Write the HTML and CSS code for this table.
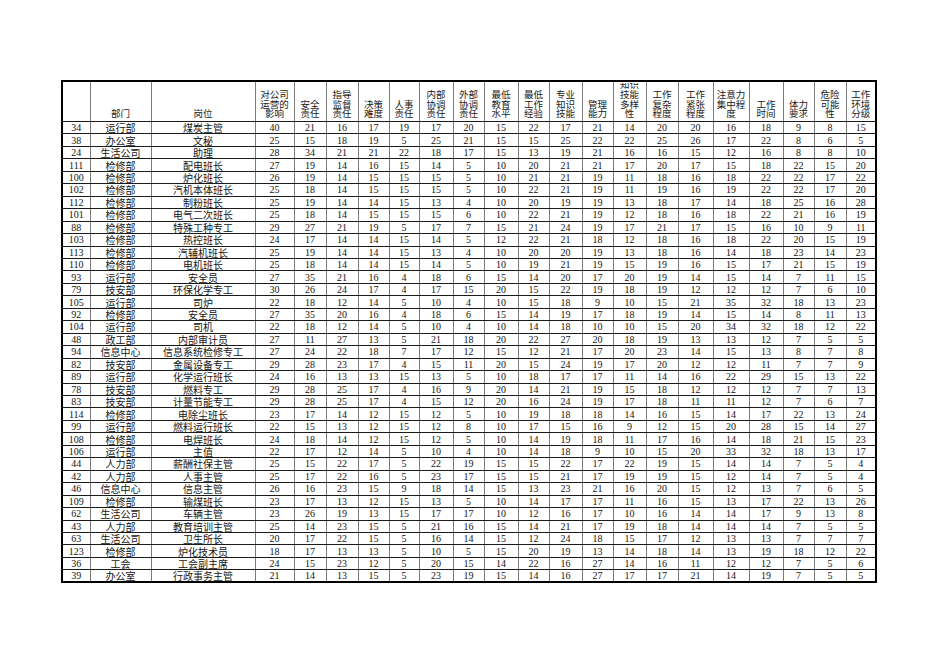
FILE: index.html
```html
<!DOCTYPE html>
<html lang="zh-CN">
<head>
<meta charset="utf-8">
<title>岗位评价表</title>
<link rel="stylesheet" href="styles.css">
</head>
<body>
<table class="sheet">
<colgroup>
<col style="width:28px"><col style="width:61px"><col style="width:104px"><col style="width:39px"><col style="width:32px"><col style="width:32px"><col style="width:31px"><col style="width:30px"><col style="width:34px"><col style="width:31px"><col style="width:34px"><col style="width:31px"><col style="width:33px"><col style="width:31px"><col style="width:33px"><col style="width:32px"><col style="width:35px"><col style="width:36px"><col style="width:34px"><col style="width:31px"><col style="width:32px"><col style="width:30px">
</colgroup>
<thead>
<tr class="head">
<th><div class="hd"></div></th>
<th><div class="hd">部门</div></th>
<th><div class="hd">岗位</div></th>
<th><div class="hd">对公司<br>运营的<br>影响</div></th>
<th><div class="hd">安全<br>责任</div></th>
<th><div class="hd">指导<br>监督<br>责任</div></th>
<th><div class="hd">决策<br>难度</div></th>
<th><div class="hd">人事<br>责任</div></th>
<th><div class="hd">内部<br>协调<br>责任</div></th>
<th><div class="hd">外部<br>协调<br>责任</div></th>
<th><div class="hd">最低<br>教育<br>水平</div></th>
<th><div class="hd">最低<br>工作<br>经验</div></th>
<th><div class="hd">专业<br>知识<br>技能</div></th>
<th><div class="hd">管理<br>能力</div></th>
<th><div class="hd">知识<br>技能<br>多样<br>性</div></th>
<th><div class="hd">工作<br>复杂<br>程度</div></th>
<th><div class="hd">工作<br>紧张<br>程度</div></th>
<th><div class="hd">注意力<br>集中程<br>度</div></th>
<th><div class="hd">工作<br>时间</div></th>
<th><div class="hd">体力<br>要求</div></th>
<th><div class="hd">危险<br>可能<br>性</div></th>
<th><div class="hd">工作<br>环境<br>分级</div></th>
</tr>
</thead>
<tbody>
<tr><td>34<td>运行部<td>煤炭主管<td>40<td>21<td>16<td>17<td>19<td>17<td>20<td>15<td>22<td>17<td>21<td>14<td>20<td>20<td>16<td>18<td>9<td>8<td>15</tr>
<tr><td>38<td>办公室<td>文秘<td>25<td>15<td>18<td>19<td>5<td>25<td>21<td>15<td>15<td>25<td>22<td>22<td>25<td>26<td>17<td>22<td>8<td>6<td>5</tr>
<tr><td>24<td>生活公司<td>助理<td>28<td>34<td>21<td>21<td>22<td>18<td>17<td>15<td>13<td>19<td>21<td>16<td>16<td>15<td>12<td>16<td>8<td>8<td>10</tr>
<tr><td>111<td>检修部<td>配电班长<td>27<td>19<td>14<td>16<td>15<td>14<td>5<td>10<td>20<td>21<td>21<td>17<td>20<td>17<td>15<td>18<td>22<td>15<td>20</tr>
<tr><td>100<td>检修部<td>炉化班长<td>26<td>19<td>14<td>15<td>15<td>15<td>5<td>10<td>21<td>21<td>19<td>11<td>18<td>16<td>18<td>22<td>22<td>17<td>22</tr>
<tr><td>102<td>检修部<td>汽机本体班长<td>25<td>18<td>14<td>15<td>15<td>15<td>5<td>10<td>22<td>21<td>19<td>11<td>19<td>16<td>19<td>22<td>22<td>17<td>20</tr>
<tr><td>112<td>检修部<td>制粉班长<td>25<td>19<td>14<td>14<td>15<td>13<td>4<td>10<td>20<td>19<td>19<td>13<td>18<td>17<td>14<td>18<td>25<td>16<td>28</tr>
<tr><td>101<td>检修部<td>电气二次班长<td>25<td>18<td>14<td>15<td>15<td>15<td>6<td>10<td>22<td>21<td>19<td>12<td>18<td>16<td>18<td>22<td>21<td>16<td>19</tr>
<tr><td>88<td>检修部<td>特殊工种专工<td>29<td>27<td>21<td>19<td>5<td>17<td>7<td>15<td>21<td>24<td>19<td>17<td>21<td>17<td>15<td>16<td>10<td>9<td>11</tr>
<tr><td>103<td>检修部<td>热控班长<td>24<td>17<td>14<td>14<td>15<td>14<td>5<td>12<td>22<td>21<td>18<td>12<td>18<td>16<td>18<td>22<td>20<td>15<td>19</tr>
<tr><td>113<td>检修部<td>汽辅机班长<td>25<td>19<td>14<td>14<td>15<td>13<td>4<td>10<td>20<td>20<td>19<td>13<td>18<td>16<td>14<td>18<td>23<td>14<td>23</tr>
<tr><td>110<td>检修部<td>电机班长<td>25<td>18<td>14<td>14<td>15<td>14<td>5<td>10<td>19<td>21<td>19<td>15<td>19<td>16<td>15<td>17<td>21<td>15<td>19</tr>
<tr><td>93<td>运行部<td>安全员<td>27<td>35<td>21<td>16<td>4<td>18<td>6<td>15<td>14<td>20<td>17<td>20<td>19<td>14<td>15<td>14<td>7<td>11<td>15</tr>
<tr><td>79<td>技安部<td>环保化学专工<td>30<td>26<td>24<td>17<td>4<td>17<td>15<td>20<td>15<td>22<td>19<td>18<td>19<td>12<td>12<td>12<td>7<td>6<td>10</tr>
<tr><td>105<td>运行部<td>司炉<td>22<td>18<td>12<td>14<td>5<td>10<td>4<td>10<td>15<td>18<td>9<td>10<td>15<td>21<td>35<td>32<td>18<td>13<td>23</tr>
<tr><td>92<td>检修部<td>安全员<td>27<td>35<td>20<td>16<td>4<td>18<td>6<td>15<td>14<td>19<td>17<td>18<td>19<td>14<td>15<td>14<td>8<td>11<td>13</tr>
<tr><td>104<td>运行部<td>司机<td>22<td>18<td>12<td>14<td>5<td>10<td>4<td>10<td>14<td>18<td>10<td>10<td>15<td>20<td>34<td>32<td>18<td>12<td>22</tr>
<tr><td>48<td>政工部<td>内部审计员<td>27<td>11<td>27<td>13<td>5<td>21<td>18<td>20<td>22<td>27<td>20<td>18<td>19<td>13<td>13<td>12<td>7<td>5<td>5</tr>
<tr><td>94<td>信息中心<td>信息系统检修专工<td>27<td>24<td>22<td>18<td>7<td>17<td>12<td>15<td>12<td>21<td>17<td>20<td>23<td>14<td>15<td>13<td>8<td>7<td>8</tr>
<tr><td>82<td>技安部<td>金属设备专工<td>29<td>28<td>23<td>17<td>4<td>15<td>11<td>20<td>15<td>24<td>19<td>17<td>20<td>12<td>12<td>11<td>7<td>7<td>9</tr>
<tr><td>89<td>运行部<td>化学运行班长<td>24<td>16<td>13<td>13<td>15<td>13<td>5<td>10<td>18<td>17<td>17<td>11<td>14<td>16<td>22<td>29<td>15<td>13<td>22</tr>
<tr><td>78<td>技安部<td>燃料专工<td>29<td>28<td>25<td>17<td>4<td>16<td>9<td>20<td>14<td>21<td>19<td>15<td>18<td>12<td>12<td>12<td>7<td>7<td>13</tr>
<tr><td>83<td>技安部<td>计量节能专工<td>29<td>28<td>25<td>17<td>4<td>15<td>12<td>20<td>16<td>24<td>19<td>17<td>18<td>11<td>11<td>12<td>7<td>6<td>7</tr>
<tr><td>114<td>检修部<td>电除尘班长<td>23<td>17<td>14<td>12<td>15<td>12<td>5<td>10<td>19<td>18<td>18<td>14<td>16<td>15<td>14<td>17<td>22<td>13<td>24</tr>
<tr><td>99<td>运行部<td>燃料运行班长<td>22<td>15<td>13<td>12<td>15<td>12<td>8<td>10<td>17<td>15<td>16<td>9<td>12<td>15<td>20<td>28<td>15<td>14<td>27</tr>
<tr><td>108<td>检修部<td>电焊班长<td>24<td>18<td>14<td>12<td>15<td>12<td>5<td>10<td>14<td>19<td>18<td>11<td>17<td>16<td>14<td>18<td>21<td>15<td>23</tr>
<tr><td>106<td>运行部<td>主值<td>22<td>17<td>12<td>14<td>5<td>10<td>4<td>10<td>14<td>18<td>9<td>10<td>15<td>20<td>33<td>32<td>18<td>13<td>17</tr>
<tr><td>44<td>人力部<td>薪酬社保主管<td>25<td>15<td>22<td>17<td>5<td>22<td>19<td>15<td>15<td>22<td>17<td>22<td>19<td>15<td>14<td>14<td>7<td>5<td>4</tr>
<tr><td>42<td>人力部<td>人事主管<td>25<td>17<td>22<td>16<td>5<td>23<td>17<td>15<td>15<td>21<td>17<td>19<td>19<td>15<td>12<td>14<td>7<td>5<td>4</tr>
<tr><td>46<td>信息中心<td>信息主管<td>26<td>16<td>23<td>15<td>9<td>18<td>14<td>15<td>13<td>23<td>21<td>16<td>20<td>15<td>12<td>13<td>7<td>6<td>5</tr>
<tr><td>109<td>检修部<td>输煤班长<td>23<td>17<td>13<td>12<td>15<td>13<td>5<td>10<td>14<td>17<td>17<td>11<td>16<td>15<td>13<td>17<td>22<td>13<td>26</tr>
<tr><td>62<td>生活公司<td>车辆主管<td>23<td>26<td>19<td>13<td>15<td>17<td>17<td>10<td>12<td>16<td>17<td>10<td>16<td>14<td>14<td>17<td>9<td>13<td>8</tr>
<tr><td>43<td>人力部<td>教育培训主管<td>25<td>14<td>23<td>15<td>5<td>21<td>16<td>15<td>14<td>21<td>17<td>19<td>18<td>14<td>14<td>14<td>7<td>5<td>5</tr>
<tr><td>63<td>生活公司<td>卫生所长<td>20<td>17<td>22<td>15<td>5<td>16<td>14<td>15<td>12<td>24<td>18<td>15<td>17<td>12<td>13<td>13<td>7<td>7<td>7</tr>
<tr><td>123<td>检修部<td>炉化技术员<td>18<td>17<td>13<td>13<td>5<td>10<td>5<td>15<td>20<td>19<td>13<td>14<td>18<td>14<td>13<td>19<td>18<td>12<td>22</tr>
<tr><td>36<td>工会<td>工会副主席<td>24<td>15<td>23<td>12<td>5<td>20<td>15<td>14<td>22<td>16<td>27<td>14<td>16<td>11<td>12<td>12<td>7<td>5<td>6</tr>
<tr><td>39<td>办公室<td>行政事务主管<td>21<td>14<td>13<td>15<td>5<td>23<td>19<td>15<td>14<td>16<td>27<td>17<td>17<td>21<td>14<td>19<td>7<td>5<td>5</tr>
</tbody>
</table>
</body>
</html>
```

FILE: styles.css
```css
html, body {
  margin: 0;
  padding: 0;
  background: #ffffff;
}

body {
  font-family: "Liberation Serif", "Noto Sans CJK SC", serif;
  font-size: 10px;
  color: #151515;
}

.sheet {
  margin: 80px 0 0 61px;
  width: 814px;
  table-layout: fixed;
  border-collapse: collapse;
  border: 2px solid #000;
}

.sheet th,
.sheet td {
  padding: 0;
  text-align: center;
  white-space: nowrap;
  overflow: hidden;
  border-top: 1px solid #1a1a1a;
  border-bottom: 1px solid #1a1a1a;
  border-left: 1px solid #7a7a7a;
  border-right: 1px solid #7a7a7a;
}

.sheet th {
  font-weight: normal;
  height: 39px;
  vertical-align: bottom;
}

.hd {
  box-sizing: border-box;
  height: 38px;
  padding-bottom: 2px;
  display: flex;
  flex-direction: column;
  justify-content: flex-end;
  overflow: hidden;
  font-family: "Noto Sans CJK SC", sans-serif;
  font-size: 9.5px;
  line-height: 9.7px;
  color: #1a1a1a;
}

.sheet td {
  height: 11px;
  line-height: 11px;
  vertical-align: middle;
}

.sheet td:nth-child(2),
.sheet td:nth-child(3) {
  font-family: "Noto Sans CJK SC", sans-serif;
  font-size: 10px;
}

.sheet tbody tr {
  height: 12.46px;
}
```
